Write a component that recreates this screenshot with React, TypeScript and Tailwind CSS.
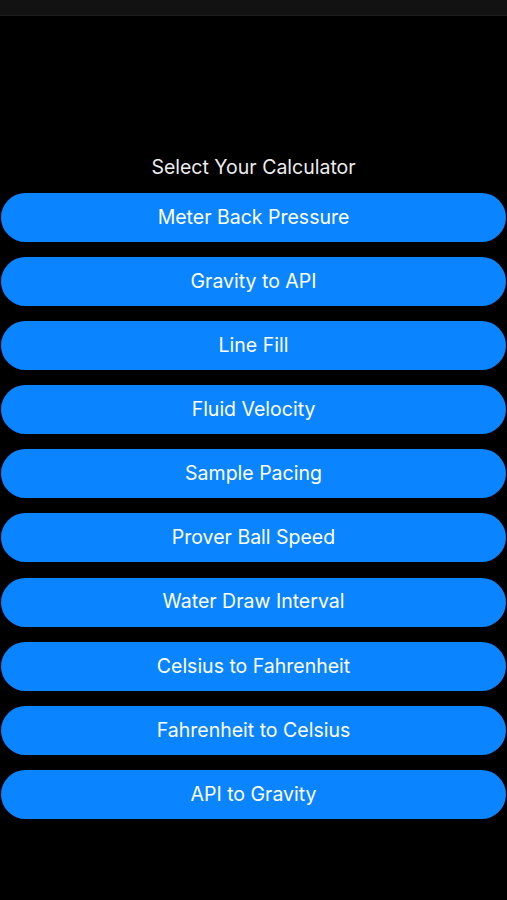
import React from 'react';

const calculators = [
  'Meter Back Pressure',
  'Gravity to API',
  'Line Fill',
  'Fluid Velocity',
  'Sample Pacing',
  'Prover Ball Speed',
  'Water Draw Interval',
  'Celsius to Fahrenheit',
  'Fahrenheit to Celsius',
  'API to Gravity',
];

export default function App() {
  return (
    <div className="w-[507px] h-[900px] bg-black flex flex-col font-['Inter','Roboto',sans-serif]">
      <div className="h-4 bg-[#121212] border-b border-[#1c1c1c]" />
      <div className="pt-[139px] flex flex-col items-center">
        <h1 className="text-[19.5px] leading-6 text-[#ececec] font-normal">Select Your Calculator</h1>
        <div className="mt-[14px] w-full flex flex-col gap-[15.1px] px-px">
          {calculators.map(name => (
            <button
              key={name}
              className="h-[49px] w-full rounded-full bg-[#0a84ff] text-white text-[19.5px] font-normal"
            >
              {name}
            </button>
          ))}
        </div>
      </div>
    </div>
  );
}
